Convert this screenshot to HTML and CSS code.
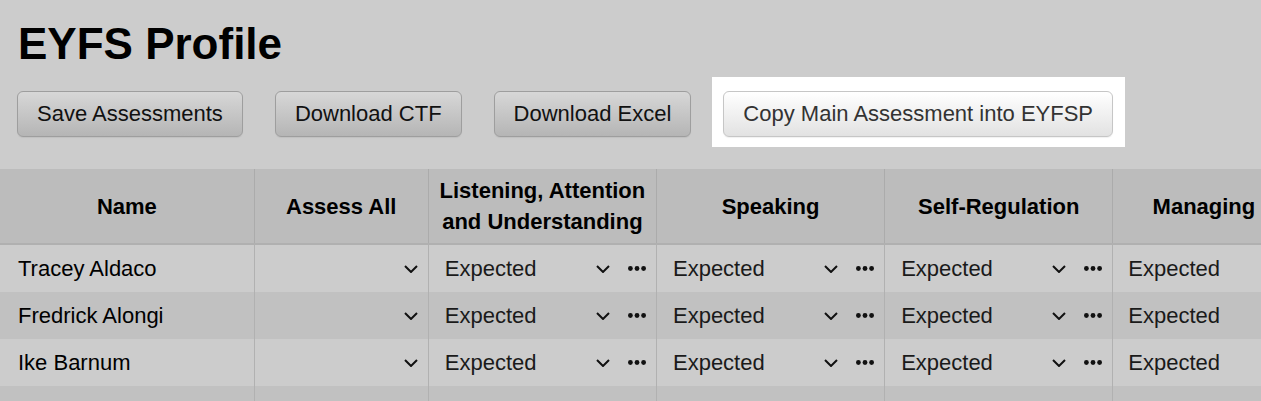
FILE: index.html
```html
<!DOCTYPE html>
<html>
<head>
<meta charset="utf-8">
<link rel="stylesheet" href="styles.css">
<title>EYFS Profile</title>
</head>
<body>
<div class="page">
  <div class="top">
    <h1 class="title">EYFS Profile</h1>
    <div class="actions">
      <button class="btn">Save Assessments</button>
      <button class="btn">Download CTF</button>
      <button class="btn">Download Excel</button>
      <span class="spotlight"><button class="btn btn-lit">Copy Main Assessment into EYFSP</button></span>
    </div>
  </div>
  <div class="table-wrap">
    <table class="grid">
      <colgroup>
        <col class="c-name"><col class="c-all"><col class="c-std"><col class="c-std"><col class="c-std"><col class="c-std">
      </colgroup>
      <thead>
        <tr>
          <th>Name</th>
          <th>Assess All</th>
          <th>Listening, Attention and Understanding</th>
          <th>Speaking</th>
          <th>Self-Regulation</th>
          <th>Managing Self</th>
        </tr>
      </thead>
      <tbody>
        <tr>
          <td class="name">Tracey Aldaco</td>
          <td class="all"><div class="sel"><span class="val"></span><svg class="chev" viewBox="0 0 14 8"><path d="M1 1l6 6 6-6"/></svg></div></td>
          <td class="cell"><div class="sel"><span class="val">Expected</span><svg class="chev" viewBox="0 0 14 8"><path d="M1 1l6 6 6-6"/></svg><svg class="dots" viewBox="0 0 18 5"><circle cx="2.4" cy="2.5" r="2.4"/><circle cx="9" cy="2.5" r="2.4"/><circle cx="15.6" cy="2.5" r="2.4"/></svg></div></td>
          <td class="cell"><div class="sel"><span class="val">Expected</span><svg class="chev" viewBox="0 0 14 8"><path d="M1 1l6 6 6-6"/></svg><svg class="dots" viewBox="0 0 18 5"><circle cx="2.4" cy="2.5" r="2.4"/><circle cx="9" cy="2.5" r="2.4"/><circle cx="15.6" cy="2.5" r="2.4"/></svg></div></td>
          <td class="cell"><div class="sel"><span class="val">Expected</span><svg class="chev" viewBox="0 0 14 8"><path d="M1 1l6 6 6-6"/></svg><svg class="dots" viewBox="0 0 18 5"><circle cx="2.4" cy="2.5" r="2.4"/><circle cx="9" cy="2.5" r="2.4"/><circle cx="15.6" cy="2.5" r="2.4"/></svg></div></td>
          <td class="cell last"><div class="sel"><span class="val">Expected</span><svg class="chev" viewBox="0 0 14 8"><path d="M1 1l6 6 6-6"/></svg><svg class="dots" viewBox="0 0 18 5"><circle cx="2.4" cy="2.5" r="2.4"/><circle cx="9" cy="2.5" r="2.4"/><circle cx="15.6" cy="2.5" r="2.4"/></svg></div></td>
        </tr>
        <tr>
          <td class="name">Fredrick Alongi</td>
          <td class="all"><div class="sel"><span class="val"></span><svg class="chev" viewBox="0 0 14 8"><path d="M1 1l6 6 6-6"/></svg></div></td>
          <td class="cell"><div class="sel"><span class="val">Expected</span><svg class="chev" viewBox="0 0 14 8"><path d="M1 1l6 6 6-6"/></svg><svg class="dots" viewBox="0 0 18 5"><circle cx="2.4" cy="2.5" r="2.4"/><circle cx="9" cy="2.5" r="2.4"/><circle cx="15.6" cy="2.5" r="2.4"/></svg></div></td>
          <td class="cell"><div class="sel"><span class="val">Expected</span><svg class="chev" viewBox="0 0 14 8"><path d="M1 1l6 6 6-6"/></svg><svg class="dots" viewBox="0 0 18 5"><circle cx="2.4" cy="2.5" r="2.4"/><circle cx="9" cy="2.5" r="2.4"/><circle cx="15.6" cy="2.5" r="2.4"/></svg></div></td>
          <td class="cell"><div class="sel"><span class="val">Expected</span><svg class="chev" viewBox="0 0 14 8"><path d="M1 1l6 6 6-6"/></svg><svg class="dots" viewBox="0 0 18 5"><circle cx="2.4" cy="2.5" r="2.4"/><circle cx="9" cy="2.5" r="2.4"/><circle cx="15.6" cy="2.5" r="2.4"/></svg></div></td>
          <td class="cell last"><div class="sel"><span class="val">Expected</span><svg class="chev" viewBox="0 0 14 8"><path d="M1 1l6 6 6-6"/></svg><svg class="dots" viewBox="0 0 18 5"><circle cx="2.4" cy="2.5" r="2.4"/><circle cx="9" cy="2.5" r="2.4"/><circle cx="15.6" cy="2.5" r="2.4"/></svg></div></td>
        </tr>
        <tr>
          <td class="name">Ike Barnum</td>
          <td class="all"><div class="sel"><span class="val"></span><svg class="chev" viewBox="0 0 14 8"><path d="M1 1l6 6 6-6"/></svg></div></td>
          <td class="cell"><div class="sel"><span class="val">Expected</span><svg class="chev" viewBox="0 0 14 8"><path d="M1 1l6 6 6-6"/></svg><svg class="dots" viewBox="0 0 18 5"><circle cx="2.4" cy="2.5" r="2.4"/><circle cx="9" cy="2.5" r="2.4"/><circle cx="15.6" cy="2.5" r="2.4"/></svg></div></td>
          <td class="cell"><div class="sel"><span class="val">Expected</span><svg class="chev" viewBox="0 0 14 8"><path d="M1 1l6 6 6-6"/></svg><svg class="dots" viewBox="0 0 18 5"><circle cx="2.4" cy="2.5" r="2.4"/><circle cx="9" cy="2.5" r="2.4"/><circle cx="15.6" cy="2.5" r="2.4"/></svg></div></td>
          <td class="cell"><div class="sel"><span class="val">Expected</span><svg class="chev" viewBox="0 0 14 8"><path d="M1 1l6 6 6-6"/></svg><svg class="dots" viewBox="0 0 18 5"><circle cx="2.4" cy="2.5" r="2.4"/><circle cx="9" cy="2.5" r="2.4"/><circle cx="15.6" cy="2.5" r="2.4"/></svg></div></td>
          <td class="cell last"><div class="sel"><span class="val">Expected</span><svg class="chev" viewBox="0 0 14 8"><path d="M1 1l6 6 6-6"/></svg><svg class="dots" viewBox="0 0 18 5"><circle cx="2.4" cy="2.5" r="2.4"/><circle cx="9" cy="2.5" r="2.4"/><circle cx="15.6" cy="2.5" r="2.4"/></svg></div></td>
        </tr>
        <tr>
          <td class="name">Francine Bowers</td>
          <td class="all"><div class="sel"><span class="val"></span><svg class="chev" viewBox="0 0 14 8"><path d="M1 1l6 6 6-6"/></svg></div></td>
          <td class="cell"><div class="sel"><span class="val">Expected</span><svg class="chev" viewBox="0 0 14 8"><path d="M1 1l6 6 6-6"/></svg><svg class="dots" viewBox="0 0 18 5"><circle cx="2.4" cy="2.5" r="2.4"/><circle cx="9" cy="2.5" r="2.4"/><circle cx="15.6" cy="2.5" r="2.4"/></svg></div></td>
          <td class="cell"><div class="sel"><span class="val">Expected</span><svg class="chev" viewBox="0 0 14 8"><path d="M1 1l6 6 6-6"/></svg><svg class="dots" viewBox="0 0 18 5"><circle cx="2.4" cy="2.5" r="2.4"/><circle cx="9" cy="2.5" r="2.4"/><circle cx="15.6" cy="2.5" r="2.4"/></svg></div></td>
          <td class="cell"><div class="sel"><span class="val">Expected</span><svg class="chev" viewBox="0 0 14 8"><path d="M1 1l6 6 6-6"/></svg><svg class="dots" viewBox="0 0 18 5"><circle cx="2.4" cy="2.5" r="2.4"/><circle cx="9" cy="2.5" r="2.4"/><circle cx="15.6" cy="2.5" r="2.4"/></svg></div></td>
          <td class="cell last"><div class="sel"><span class="val">Expected</span><svg class="chev" viewBox="0 0 14 8"><path d="M1 1l6 6 6-6"/></svg><svg class="dots" viewBox="0 0 18 5"><circle cx="2.4" cy="2.5" r="2.4"/><circle cx="9" cy="2.5" r="2.4"/><circle cx="15.6" cy="2.5" r="2.4"/></svg></div></td>
        </tr>
      </tbody>
    </table>
  </div>
</div>
</body>
</html>
```

FILE: styles.css
```css
html, body {
  margin: 0;
  padding: 0;
  background: #cccccc;
  overflow: hidden;
}

body {
  font-family: "Liberation Sans", Arial, sans-serif;
  font-size: 22px;
  line-height: 31px;
  color: #111;
}

.page {
  width: 1261px;
}

.top {
  padding: 17px 17px 0 17px;
}

.title {
  margin: 0;
  font-size: 44px;
  line-height: 53px;
  font-weight: 700;
  color: #000;
  padding-left: 1px;
}

.actions {
  display: flex;
  align-items: center;
  gap: 32px;
  margin-top: 21px;
}

.btn {
  font-family: "Liberation Sans", Arial, sans-serif;
  font-size: 22px;
  line-height: 26px;
  padding: 9px 19px;
  border: 1px solid #9e9e9e;
  border-radius: 6px;
  background: linear-gradient(to bottom, #d7d7d7 0%, #b5b5b5 100%);
  color: #111;
  box-shadow: 0 1px 1px rgba(0, 0, 0, 0.06);
  margin: 0;
  white-space: nowrap;
}

.spotlight {
  display: inline-flex;
  background: #ffffff;
  padding: 14px 12px 10px 11px;
  margin: -14px -12px -10px -11px;
}

.btn-lit {
  background: linear-gradient(to bottom, #ffffff 0%, #e2e2e2 100%);
  border-color: #c6c6c6;
  color: #333;
}

.table-wrap {
  margin-top: 32px;
  width: 1261px;
  overflow: hidden;
}

.grid {
  border-collapse: collapse;
  table-layout: fixed;
  width: 1341px;
}

.c-name { width: 254px; }
.c-all { width: 174px; }
.c-std { width: 228px; }

.grid th {
  background: #bcbcbc;
  font-weight: 700;
  color: #000;
  text-align: center;
  vertical-align: middle;
  padding: 6px 8px;
  height: 62px;
  line-height: 31px;
  border-left: 1px solid #ababab;
  border-bottom: 2px solid #b0b0b0;
}

.grid th:first-child,
.grid td:first-child {
  border-left: none;
}

.grid td {
  padding: 8px 0;
  height: 31px;
  border-left: 1px solid #b1b1b1;
  vertical-align: middle;
  white-space: nowrap;
  overflow: hidden;
}

.grid tbody tr:nth-child(odd) td {
  background: #cccccc;
}

.grid tbody tr:nth-child(even) td {
  background: #c1c1c1;
}

.name {
  padding-left: 18px !important;
  color: #000;
}

.sel {
  display: flex;
  align-items: center;
  height: 31px;
}

.all .sel {
  padding: 0 10px 0 17px;
}

.cell .sel {
  padding: 0 10px 0 16px;
}

.cell.last .sel {
  padding-left: 15px;
}

.val {
  flex: 1;
  color: #1a1a1a;
  overflow: hidden;
}

.chev {
  width: 14px;
  height: 8px;
  fill: none;
  stroke: #111;
  stroke-width: 2;
  flex: none;
}

.dots {
  width: 18px;
  height: 5px;
  fill: #111;
  flex: none;
  margin-left: 18px;
}
```
